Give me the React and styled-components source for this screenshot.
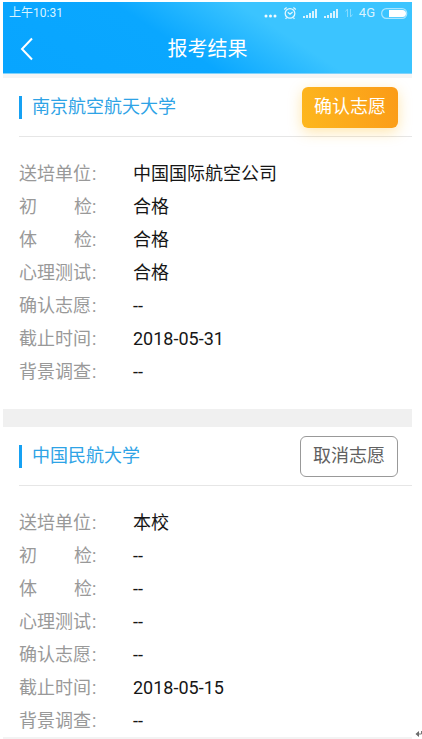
import React from "react";
import styled, { createGlobalStyle } from "styled-components";

const GlobalStyle = createGlobalStyle`
  * { box-sizing: border-box; }
  body {
    margin: 0;
    background: #fff;
    font-family: Roboto, "Noto Sans CJK SC", sans-serif;
    color: #161616;
  }
`;

const Page = styled.div`
  display: flex;
  align-items: flex-end;
  padding: 2px 0 0 3px;
`;

const Screen = styled.main`
  flex: 1;
  min-width: 0;
`;

const ReturnMark = styled.svg`
  flex: none;
  width: 10px;
  height: 9px;
`;

const TopArea = styled.header`
  background: linear-gradient(33deg, #08a5ff 0%, #0aa7ff 42%, #3bc4ff 66%, #3bc4ff 100%);
  color: #fff;
  border-bottom: 1px solid #7fd2fb;
`;

const StatusBar = styled.div`
  display: flex;
  align-items: center;
  justify-content: space-between;
  height: 22px;
  padding: 0 4px 0 6px;
  font-size: 12px;
  line-height: 22px;
  color: #d9f3ff;
`;

const StatusIcons = styled.div`
  display: flex;
  align-items: center;
  gap: 6px;
`;

const Network = styled.span`
  font-size: 13px;
`;

const Icon = styled.svg`
  display: block;
  flex: none;
`;

const NavBar = styled.div`
  display: grid;
  grid-template-columns: 48px 1fr 48px;
  align-items: center;
  height: 49px;
`;

const BackButton = styled.button`
  display: flex;
  align-items: center;
  height: 44px;
  padding: 0 0 0 16px;
  border: 0;
  background: none;
  color: #fff;
`;

const Title = styled.h1`
  margin: 0;
  font-size: 20px;
  line-height: 30px;
  font-weight: 400;
  text-align: center;
`;

const Results = styled.div`
  display: flex;
  flex-direction: column;
  gap: 18px;
  padding-top: 4px;
  background: linear-gradient(#f5f5f5 4px, #f0f0f0 4px);
  border-bottom: 2px solid #f3f3f3;
`;

const Card = styled.section`
  background: #fff;
  padding-bottom: ${(p) => (p.$last ? 0 : 21)}px;
`;

const CardHeader = styled.div`
  display: flex;
  align-items: center;
  justify-content: space-between;
  height: 59px;
  margin-left: 16px;
  padding-right: 14px;
  border-bottom: 1px solid #e6e6e6;
`;

const School = styled.h2`
  display: flex;
  align-items: center;
  gap: 10px;
  margin: 0;
  font-size: 18px;
  line-height: 28px;
  font-weight: 400;
  color: #2ea3e6;

  &::before {
    content: "";
    width: 3px;
    height: 23px;
    background: #16a1f3;
  }
`;

const ActionButton = styled.button`
  height: 41px;
  padding: 0 12px;
  border-radius: 6px;
  font-family: inherit;
  font-size: 18px;
  line-height: 26px;
  border: ${(p) => (p.$primary ? "0" : "1px solid #999")};
  color: ${(p) => (p.$primary ? "#fff" : "#606060")};
  background: ${(p) => (p.$primary ? "linear-gradient(75deg, #fdb71e, #fb9b17)" : "#fff")};
  box-shadow: ${(p) => (p.$primary ? "0 4px 14px rgba(255, 190, 40, 0.38)" : "none")};
`;

const Details = styled.dl`
  display: grid;
  grid-template-columns: 114px 1fr;
  margin: 0;
  padding: 20px 16px 0;
  font-size: 18px;
  line-height: 33px;
`;

const Label = styled.dt`
  display: flex;
  color: #999;
`;

const LabelText = styled.span`
  display: flex;
  justify-content: space-between;
  width: 73px;
`;

const Value = styled.dd`
  margin: 0;
`;

const FIELDS = [["送培单位"], ["初", "检"], ["体", "检"], ["心理测试"], ["确认志愿"], ["截止时间"], ["背景调查"]];

const SCHOOLS = [
  {
    name: "南京航空航天大学",
    action: "确认志愿",
    primary: true,
    values: ["中国国际航空公司", "合格", "合格", "合格", "--", "2018-05-31", "--"],
  },
  {
    name: "中国民航大学",
    action: "取消志愿",
    primary: false,
    values: ["本校", "--", "--", "--", "--", "2018-05-15", "--"],
  },
];

function Signal() {
  return (
    <Icon width="15" height="10" viewBox="0 0 15 10" fill="#d9f3ff" aria-hidden="true">
      <rect x="0" y="8" width="2" height="2" />
      <rect x="3" y="7" width="2" height="3" />
      <rect x="6" y="5" width="2" height="5" />
      <rect x="9" y="3" width="2" height="7" />
      <rect x="12" y="1" width="2" height="9" />
    </Icon>
  );
}

function Status() {
  return (
    <StatusBar>
      <span>上午10:31</span>
      <StatusIcons>
        <Icon width="13" height="12" viewBox="0 0 13 12" fill="#f2fbff" aria-hidden="true">
          <circle cx="2" cy="9" r="1.5" />
          <circle cx="6.5" cy="9" r="1.5" />
          <circle cx="11" cy="9" r="1.5" />
        </Icon>
        <Icon width="14" height="14" viewBox="0 0 14 14" fill="none" stroke="#e2f6ff" strokeWidth="1.3" aria-hidden="true">
          <circle cx="7" cy="7.4" r="4.8" />
          <path d="M1.2 3.4 3.6 1.4M12.8 3.4 10.4 1.4M4.8 6.3 7 8.2 9.6 6M3.6 11.5 2.6 13M10.4 11.5 11.4 13" />
        </Icon>
        <Signal />
        <Signal />
        <Icon width="8" height="10" viewBox="0 0 8 10" fill="none" stroke="#86dbff" aria-hidden="true">
          <path d="M2.5 9V1L.5 3.5M5.5 1v8l2-2.5" />
        </Icon>
        <Network>4G</Network>
        <Icon width="27" height="11" viewBox="0 0 27 11" aria-hidden="true">
          <rect x=".7" y=".7" width="25" height="9.6" rx="4.6" fill="none" stroke="#a9e5ff" strokeWidth="1.2" />
          <path d="M8 2h13.5a3.5 3.5 0 0 1 0 7H8z" fill="#fff" />
        </Icon>
      </StatusIcons>
    </StatusBar>
  );
}

function SchoolCard({ school, last }) {
  return (
    <Card $last={last}>
      <CardHeader>
        <School>{school.name}</School>
        <ActionButton type="button" $primary={school.primary}>
          {school.action}
        </ActionButton>
      </CardHeader>
      <Details>
        {FIELDS.map((parts, i) => (
          <React.Fragment key={i}>
            <Label>
              <LabelText>
                {parts.map((part) => (
                  <span key={part}>{part}</span>
                ))}
              </LabelText>
              :
            </Label>
            <Value>{school.values[i]}</Value>
          </React.Fragment>
        ))}
      </Details>
    </Card>
  );
}

export default function App() {
  return (
    <>
      <GlobalStyle />
      <Page>
        <Screen>
          <TopArea>
            <Status />
            <NavBar>
              <BackButton type="button" aria-label="返回">
                <Icon width="16" height="24" viewBox="0 0 16 24" fill="none" stroke="currentColor" strokeWidth="2">
                  <path d="M13 1.5 3 12l10 10.5" />
                </Icon>
              </BackButton>
              <Title>报考结果</Title>
            </NavBar>
          </TopArea>
          <Results>
            {SCHOOLS.map((school, i) => (
              <SchoolCard key={school.name} school={school} last={i === SCHOOLS.length - 1} />
            ))}
          </Results>
        </Screen>
        <ReturnMark viewBox="0 0 10 9" aria-hidden="true">
          <path d="M3.5 4 7 1v6z" fill="#666" />
          <path d="M5 4h4.500V1" fill="none" stroke="#777" />
        </ReturnMark>
      </Page>
    </>
  );
}
